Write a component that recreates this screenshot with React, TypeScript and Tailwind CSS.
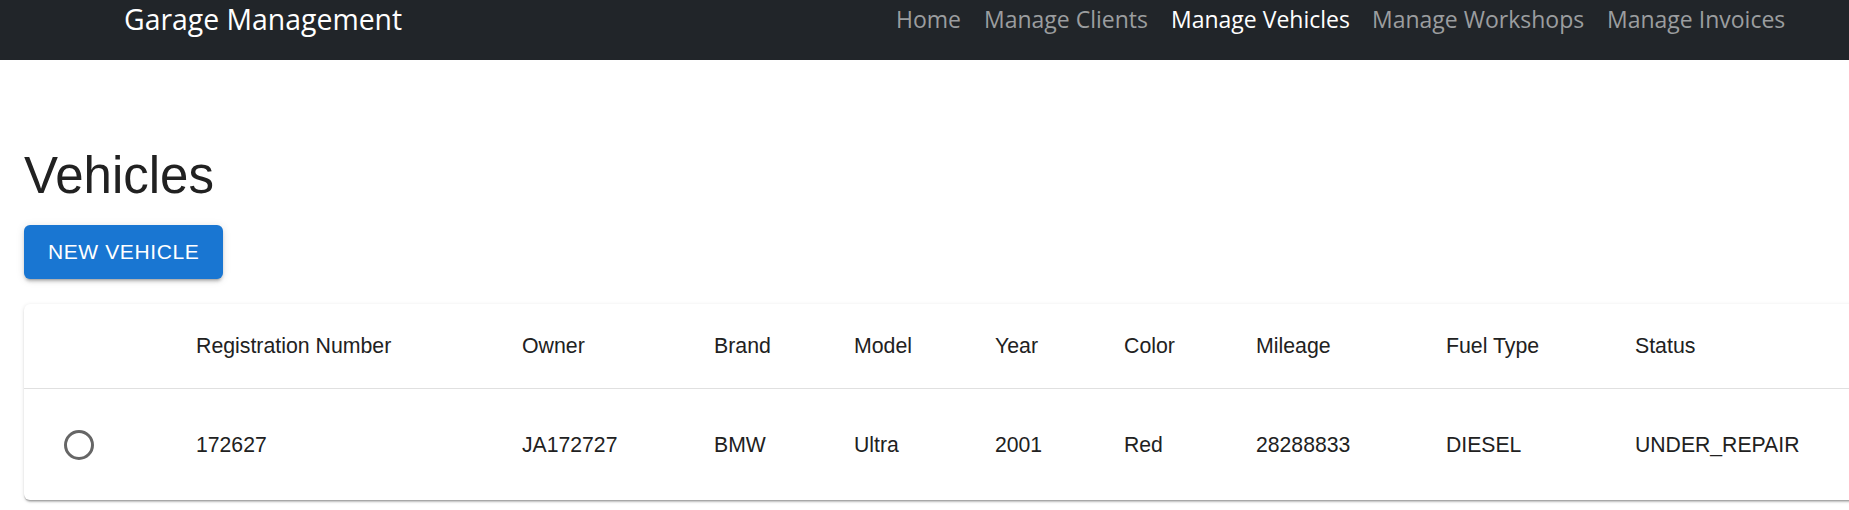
import { useState } from "react";

const links = [
  { label: "Home", w: "w-[88px]" },
  { label: "Manage Clients", w: "w-[187px]" },
  { label: "Manage Vehicles", w: "w-[201px]", active: true },
  { label: "Manage Workshops", w: "w-[235px]" },
  { label: "Manage Invoices", w: "w-[200px]" },
];

const columns = [
  "Registration Number",
  "Owner",
  "Brand",
  "Model",
  "Year",
  "Color",
  "Mileage",
  "Fuel Type",
  "Status",
];

const vehicles = [
  {
    id: 1,
    values: ["172627", "JA172727", "BMW", "Ultra", "2001", "Red", "28288833", "DIESEL", "UNDER_REPAIR"],
  },
];

const grid =
  "grid grid-cols-[172px_326px_192px_140px_141px_129px_132px_190px_189px_1fr]";

export default function App() {
  const [selected, setSelected] = useState<number | null>(null);

  return (
    <div className="min-h-screen overflow-x-hidden bg-white font-['Liberation_Sans',Arial,sans-serif] text-[#212121]">
      <nav className="flex h-[60px] items-start bg-[#212529] pl-[124px] font-['Open_Sans','Noto_Sans',sans-serif]">
        <div className="w-[772px] text-[28.4px] leading-[38px] text-white">Garage Management</div>
        <div className="flex pt-[3px]">
          {links.map((l) => (
            <a
              key={l.label}
              href="#"
              className={`${l.w} whitespace-nowrap text-[23px] leading-[32px] ${l.active ? "text-white" : "text-[#9b9d9f]"}`}
            >
              {l.label}
            </a>
          ))}
        </div>
      </nav>

      <main className="px-[24px]">
        <h1 className="mt-[84px] text-[51px] font-normal leading-[63px]">Vehicles</h1>

        <button className="mt-[18px] h-[54px] rounded-[6px] bg-[#1976d2] px-[24px] text-[21px] font-medium tracking-[0.6px] text-white shadow-[0_4px_2px_-3px_rgba(0,0,0,0.2),0_3px_3px_0_rgba(0,0,0,0.14),0_1px_8px_0_rgba(0,0,0,0.12)]">
          NEW VEHICLE
        </button>

        <div className="mt-[25px] w-[1880px] rounded-[6px] bg-white shadow-[0_3px_2px_-1px_rgba(0,0,0,0.2),0_1px_1px_0_rgba(0,0,0,0.14),0_1px_4px_0_rgba(0,0,0,0.12)]">
          <div className={`${grid} h-[85px] items-center border-b border-[#e0e0e0] text-[21.3px] leading-[36px]`}>
            <div />
            {columns.map((c) => (
              <div key={c} className="pr-[24px]">{c}</div>
            ))}
          </div>

          {vehicles.map((v) => (
            <div key={v.id} className={`${grid} h-[111px] items-center text-[21.2px] leading-[30px]`}>
              <div className="flex pl-[40px]">
                <button
                  onClick={() => setSelected(v.id)}
                  className="flex h-[30px] w-[30px] items-center justify-center rounded-full border-[3px] border-[#666666]"
                >
                  {selected === v.id && <span className="h-[14px] w-[14px] rounded-full bg-[#1976d2]" />}
                </button>
              </div>
              {v.values.map((val, i) => (
                <div key={i} className="pr-[24px]">{val}</div>
              ))}
            </div>
          ))}
        </div>
      </main>
    </div>
  );
}
